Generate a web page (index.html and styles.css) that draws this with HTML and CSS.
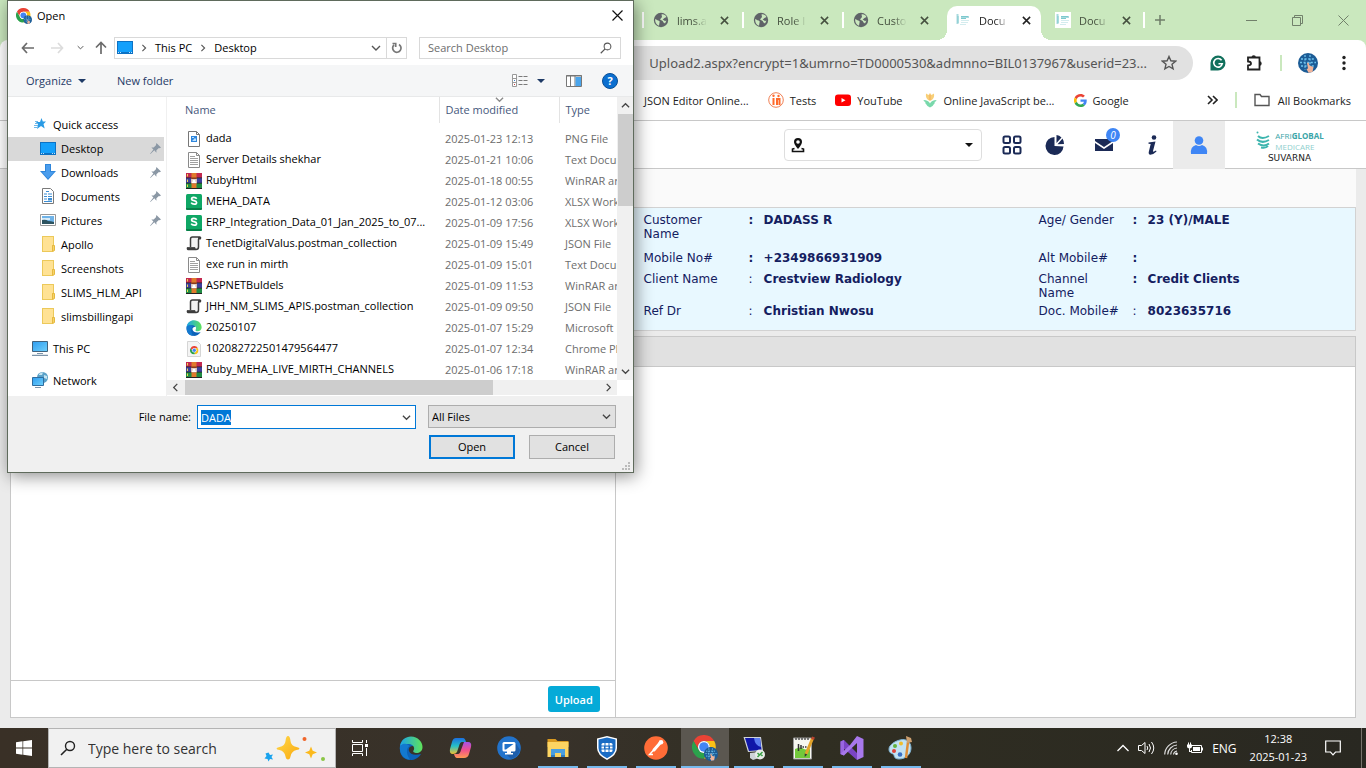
FILE: index.html
```html
<!DOCTYPE html>
<html lang="en">
<head>
  <meta charset="UTF-8">
  <meta name="viewport" content="width=device-width, initial-scale=1">
  <title>Document Upload</title>
  <link rel="stylesheet" href="styles.css">
</head>
<body>
  <!-- shared icons -->
  <svg class="sprite" width="0" height="0" aria-hidden="true">
    <defs>
      <linearGradient id="gEdge" x1="0" y1="0" x2="1" y2="0"><stop offset="0" stop-color="#1ba3e8"/><stop offset="1" stop-color="#5fe35a"/></linearGradient>
      <linearGradient id="gScreen" x1="0" y1="0" x2="1" y2="1"><stop offset="0" stop-color="#2e9df0"/><stop offset="1" stop-color="#6fd0fb"/></linearGradient>
      <linearGradient id="gCopA" x1="0" y1="0" x2="0" y2="1"><stop offset="0" stop-color="#1b6fe0"/><stop offset=".5" stop-color="#25c0c8"/><stop offset="1" stop-color="#f2c230"/></linearGradient>
      <linearGradient id="gCopB" x1="0" y1="0" x2="0" y2="1"><stop offset="0" stop-color="#a552e8"/><stop offset=".5" stop-color="#f0508c"/><stop offset="1" stop-color="#ff9a52"/></linearGradient>
      <linearGradient id="gStar" x1="0" y1="0" x2="1" y2="1"><stop offset="0" stop-color="#ffd84a"/><stop offset="1" stop-color="#f9a90e"/></linearGradient>
    </defs>
    <symbol id="chrome" viewBox="0 0 48 48">
      <path fill="#ea4335" d="M24 12h20.8A24 24 0 0 0 3.2 12l10.4 18A12 12 0 0 1 24 12z"/>
      <path fill="#2ba24c" d="M13.6 30 3.2 12A24 24 0 0 0 24 48l10.4-18a12 12 0 0 1-20.8 0z"/>
      <path fill="#fbc116" d="M34.4 30 24 48a24 24 0 0 0 20.8-36H24a12 12 0 0 1 10.4 18z"/>
      <circle cx="24" cy="24" r="12" fill="#fff"/><circle cx="24" cy="24" r="9.5" fill="#4285f4"/>
    </symbol>
    <symbol id="avatar" viewBox="0 0 20 20">
      <circle cx="10" cy="10" r="10" fill="#1c5c96"/>
      <path fill="none" stroke="#6fc3ee" stroke-width="1.3" stroke-dasharray="2 1.6" d="M3 6h14M2 9.500h16M3 13h14M7 2v15M12 2v15"/>
      <path fill="#f0b49a" d="M9 10l1.500-.5 1 3 4 1.500-1 5-4 .8-2-3.800 1.500-.5z"/>
    </symbol>
    <symbol id="chromeUser" viewBox="0 0 24 24">
      <use href="#chrome" width="22" height="22"/><use href="#avatar" x="11" y="11" width="13" height="13"/>
    </symbol>
    <symbol id="edge" viewBox="0 0 24 24">
      <path fill="#0c62b8" d="M1 10c1-5 5-6 10-5 3 1 4 3 3 5-3 0-5 2-4 5s5 5 12 3c-3 5-8 6.500-12 5.800C4 23 0 18 1 10z"/>
      <path fill="url(#gEdge)" d="M1 10C2 4 6.500.5 12 .5 19 .5 23.500 6 23.500 11c0 4-3 6-6 6-2 0-4-1-3-2.500 1.500-2 .5-6-4.500-6.500C6 7.500 2 9 1 10z"/>
      <path fill="#1379cf" d="M1 10c4-4 8-2 9.500 0C7 12 7 18 11 23.800 4 23 0 17 1 10z"/>
    </symbol>
    <symbol id="globe" viewBox="0 0 16 16">
      <circle cx="8" cy="8" r="7.200" fill="#5f6368"/>
      <path fill="#cae8be" d="M2.200 7 5 8.500c1.500 0 2 1 1.500 2.200l-.5 3C3.500 13 1.800 10 2.200 7zM8.500 2.500c2-.5 4 .5 5 2.500l-2 1-1.800 1.500L12 9l1.500-.5-1.500 3-1.500-1-.8-1.500-2.700-1.500L9 5z"/>
    </symbol>
    <symbol id="cross" viewBox="0 0 10 10"><path fill="none" stroke="currentColor" stroke-width="1.700" d="M1 1l8 8M9 1l-8 8"/></symbol>
    <symbol id="docFav" viewBox="0 0 16 16">
      <path fill="#fff" d="M0 0h16v16H0z"/><path stroke="#a9dade" stroke-width="2" d="M2.500 2v10M6 5h8"/><path stroke="#7cc9ce" d="M3 4v7M6 4.500h7M6 6.500h5"/><path stroke="#d3ecee" d="M6 8.500h8M5 12.500h6M6 10.500h7"/>
    </symbol>
    <symbol id="chev" viewBox="0 0 10 10"><path fill="none" stroke="currentColor" stroke-width="1.400" d="M1 3l4 4 4-4"/></symbol>
    <symbol id="pin" viewBox="0 0 12 12"><path fill="#8b98a5" d="M7 0l5 5-1.500.8-.8-.3L7 8v2.500L4.700 8 .5 12l-.4-.3L3.700 7.200 1.500 5H4l2.500-2.500z"/></symbol>
    <symbol id="desk" viewBox="0 0 16 13"><path fill="#0d72c4" d="M0 0h16v13H0z"/><path fill="#14a0fb" d="M1 1h14v10H1z"/><path stroke="#bfe3fb" stroke-dasharray="1 1" d="M1 11.500h3M12 11.500h3"/></symbol>
    <symbol id="folder" viewBox="0 0 16 16"><path fill="#ecc95a" d="M2 0h12v15l-2 1H2z"/><path fill="#ffe294" d="M3 1h10v8h-1v6H3z"/><path fill="#f5d36c" stroke="#e6b93e" d="M12.500 9.500h2v5l-2 1z"/></symbol>
    <symbol id="txt" viewBox="0 0 16 16"><path fill="#fff" stroke="#8a8a8a" d="M2.500.5h8l3 3v12h-11z"/><path stroke="#a0a0a0" d="M4 4.500h5M4 6.500h8M4 8.500h8M4 10.500h8M4 12.500h8"/><path fill="none" stroke="#8a8a8a" d="M10.500.5v3h3"/></symbol>
    <symbol id="png" viewBox="0 0 16 16"><path fill="#fff" stroke="#777" d="M2.500.5h8l3 3v12h-11z"/><path fill="#2f86dc" d="M5 5h6v6H5z"/><path fill="#bfe3ff" d="M6 6h2v1H6zM6 10l3-3 1 1v2z"/><path fill="none" stroke="#777" d="M10.500.5v3h3"/></symbol>
    <symbol id="rar" viewBox="0 0 16 16">
      <path fill="#c2284f" d="M0 0h16v5H0z"/><path fill="#3d3e9b" d="M0 5h16v5H0z"/><path fill="#1f8b43" d="M0 10h16v5H0z"/><path fill="#222" d="M0 4.500h16v.8H0zM0 9.800h16v.8H0zM0 15h16v1H0z"/>
      <path fill="#e07a2c" d="M5.500 0h5v15h-5z"/><path fill="#8c3b1c" d="M5.500 4.500h5v6h-5z"/><path fill="none" stroke="#fff" stroke-width="1.300" d="M6 6v3.500h1.500V7h1v2.500H10V6"/><path stroke="#ecd94e" d="M1.500 1v2.500M1.500 6.500V9M1.500 11.500V14"/>
    </symbol>
    <symbol id="xlsx" viewBox="0 0 16 16"><rect width="16" height="16" rx="1.500" fill="#0fa765"/><path fill="#087f48" d="M0 14h16v.5q0 1.500-1.500 1.500h-13Q0 16 0 14.500z"/><path fill="none" stroke="#fff" stroke-width="1.700" d="M10.700 4.800C9.500 2.800 5.500 3 5.600 5.100c.1 2 5 1.200 5 3.300 0 2.300-4.300 2.200-5.400.2"/></symbol>
    <symbol id="json" viewBox="0 0 16 16"><path fill="#f2f2f2" stroke="#3c3c3c" stroke-width="1.500" d="M4.500 11V3q0-2 2-2h8q-2 .5-2 2.500V11q0 2.500-2.500 2.500H3Q1 13.500 1.500 12h7q.3 1.500 1.500 1.500"/><path fill="#3c3c3c" d="M12 1h3.200q.3 2-.7 2.500h-2zM1 11.500h8l.5 2.500H3q-2-.3-2-2.500z"/></symbol>
    <symbol id="chromeDoc" viewBox="0 0 16 16"><path fill="#f4f4f4" stroke="#d5d5d5" d="M1.500.5h10l3 3v12h-13z"/><use href="#chrome" x="4" y="5" width="8.500" height="8.500"/></symbol>
    <symbol id="mag" viewBox="0 0 16 16"><circle cx="10" cy="6" r="4.500" fill="none" stroke="currentColor" stroke-width="1.400"/><path stroke="currentColor" stroke-width="1.600" d="M6.800 9.200 1 15"/></symbol>
  </svg>

  <div class="tabstrip">
    <div class="tab"><svg class="i16"><use href="#globe"/></svg><span class="tab-title">lims.a</span><button aria-label="Close tab"><svg class="i9"><use href="#cross"/></svg></button></div>
    <div class="tab"><svg class="i16"><use href="#globe"/></svg><span class="tab-title">Role I</span><button aria-label="Close tab"><svg class="i9"><use href="#cross"/></svg></button></div>
    <div class="tab"><svg class="i16"><use href="#globe"/></svg><span class="tab-title">Custo</span><button aria-label="Close tab"><svg class="i9"><use href="#cross"/></svg></button></div>
    <div class="tab active"><svg class="i16"><use href="#docFav"/></svg><span class="tab-title">Docu</span><button aria-label="Close tab"><svg class="i9"><use href="#cross"/></svg></button></div>
    <div class="tab plain"><svg class="i16"><use href="#docFav"/></svg><span class="tab-title">Docu</span><button aria-label="Close tab"><svg class="i9"><use href="#cross"/></svg></button></div>
    <button class="new-tab" aria-label="New tab"><svg width="12" height="12" viewBox="0 0 12 12"><path stroke="#6f7d69" stroke-width="1.500" d="M6 1v10M1 6h10"/></svg></button>
    <div class="win-controls">
      <button aria-label="Minimize"><svg width="11" height="11" viewBox="0 0 11 11"><path stroke="#71806b" d="M0 5.500h11"/></svg></button>
      <button aria-label="Restore"><svg width="11" height="11" viewBox="0 0 11 11"><path fill="none" stroke="#71806b" d="M.5 2.500h8v8h-8zM2.500 2.500v-2h8v8h-2"/></svg></button>
      <button aria-label="Close"><svg width="11" height="11" viewBox="0 0 11 11"><path stroke="#71806b" d="M.5.5l10 10M10.500.5l-10 10"/></svg></button>
    </div>
  </div>

  <div class="browser-bars">
    <div class="toolbar">
      <div class="omnibox">
        <input type="text" aria-label="Address" value="Upload2.aspx?encrypt=1&amp;umrno=TD0000530&amp;admnno=BIL0137967&amp;userid=23...">
        <button aria-label="Bookmark"><svg width="16" height="16" viewBox="0 0 16 16"><path fill="none" stroke="#555" stroke-width="1.400" d="M8 1.500l1.900 4.300 4.700.4-3.600 3.100 1.100 4.600L8 11.500l-4.100 2.400L5 9.300 1.400 6.200l4.700-.4z"/></svg></button>
      </div>
      <button aria-label="Grammarly"><svg width="16" height="16" viewBox="0 0 16 16"><path fill="#11705c" d="M8 .5A7.500 7.500 0 1 1 8 15.500H.5V8A7.500 7.500 0 0 1 8 .5z"/><path fill="none" stroke="#fff" stroke-width="1.600" d="M11.600 5.300A4.300 4.300 0 1 0 12.300 8.700H8.500"/></svg></button>
      <button aria-label="Extensions"><svg width="18" height="18" viewBox="0 0 18 18"><path fill="none" stroke="#222" stroke-width="1.800" d="M3 3.500h11.500v12H3v-4q3-.2 3-2T3 7.500z"/><path fill="#222" d="M6.500 3.500a2.200 2.200 0 0 1 4.400 0zM14.500 7.300a2.200 2.200 0 0 1 0 4.400z"/></svg></button>
      <span class="bar-sep"></span>
      <button aria-label="Profile"><svg width="20" height="20"><use href="#avatar"/></svg></button>
      <button aria-label="Menu"><svg width="4" height="16" viewBox="0 0 4 16"><g fill="#222"><circle cx="2" cy="2.500" r="1.700"/><circle cx="2" cy="8" r="1.700"/><circle cx="2" cy="13.500" r="1.700"/></g></svg></button>
    </div>
    <div class="bookmarks">
      <a href="#">JSON Editor Online...</a>
      <a href="#"><svg width="16" height="16" viewBox="0 0 16 16"><circle cx="8" cy="8" r="7.300" fill="#fff" stroke="#f08055"/><path fill="none" stroke="#ff6a2b" stroke-width="2" d="M5.500 6v7M9 13V7h2.500v6"/><circle cx="5.500" cy="3.800" r="1.200" fill="#ff6a2b"/><circle cx="10.500" cy="4" r="1.200" fill="#ff6a2b"/></svg>Tests</a>
      <a href="#"><svg width="16" height="16" viewBox="0 0 16 16"><rect y="2.500" width="16" height="11.500" rx="3" fill="#f00"/><path fill="#fff" d="M6.500 6v4.500l4-2.200z"/></svg>YouTube</a>
      <a href="#"><svg width="16" height="16" viewBox="0 0 16 16"><path fill="#f8cf77" d="M8 1l1.500 2L12 1.500Q13 7 8 9 3 7 4 1.500L6.500 3z"/><path fill="none" stroke="#f3a95e" d="M8 3v5"/><path fill="#79d8ab" d="M1.500 8q5 0 6.500 3.500Q9.500 8 14.500 8q0 1.500-2 2 1 1-.5 2-1 2.500-4 3.500-3-1-4-3.500-1.500-1-.5-2-2-.5-2-2z"/></svg>Online JavaScript be...</a>
      <a href="#"><svg width="13" height="13" viewBox="0 0 48 48"><path fill="#ea4335" d="M24 9.500c3.500 0 6.700 1.200 9.200 3.600l6.900-6.900C35.900 2.400 30.500 0 24 0 14.600 0 6.500 5.400 2.600 13.200l8 6.200C12.400 13.700 17.700 9.500 24 9.500z"/><path fill="#4285f4" d="M47 24.500c0-1.600-.2-3.100-.4-4.500H24v9h12.900c-.6 3-2.300 5.500-4.800 7.200l7.700 6C44.400 38 47 32 47 24.500z"/><path fill="#fbbc05" d="M10.500 28.600a14 14 0 0 1 0-9.200l-8-6.200a24 24 0 0 0 0 21.600z"/><path fill="#34a853" d="M24 48c6.500 0 11.900-2.100 15.900-5.800l-7.700-6c-2.200 1.500-5 2.300-8.200 2.300-6.300 0-11.600-4.200-13.500-9.900l-8 6.200C6.500 42.600 14.600 48 24 48z"/></svg>Google</a>
      <button class="more" aria-label="More bookmarks"><svg width="11" height="10" viewBox="0 0 11 10"><path fill="none" stroke="#222" stroke-width="1.600" d="M1 1l4 4-4 4M6 1l4 4-4 4"/></svg></button>
      <span class="bar-sep"></span>
      <a class="all" href="#"><svg width="16" height="14" viewBox="0 0 16 14"><path fill="none" stroke="#555" stroke-width="1.400" d="M1 1.500h5l1.500 2H15v9H1z"/></svg>All Bookmarks</a>
    </div>
  </div>

  <header class="app-header">
    <div class="branch">
      <svg width="14" height="16" viewBox="0 0 14 16"><path fill="#111" d="M7 1a4 4 0 0 1 4 4c0 2.500-4 7-4 7S3 7.500 3 5a4 4 0 0 1 4-4z"/><circle cx="7" cy="5" r="1.800" fill="#fff"/><path fill="none" stroke="#111" stroke-width="1.600" d="M3.500 11.500 1.500 12v2.500h11V12l-2-.5"/></svg>
      <select aria-label="Branch"><option></option></select>
      <i class="caret"></i>
    </div>
    <button class="modules" aria-label="Modules"><svg width="20" height="20" viewBox="0 0 20 20"><g fill="none" stroke="#1b2a56" stroke-width="2"><rect x="1.500" y="1.500" width="6.500" height="6.500" rx="1.500"/><rect x="12" y="1.500" width="6.500" height="6.500" rx="1.500"/><rect x="1.500" y="12" width="6.500" height="6.500" rx="1.500"/><rect x="12" y="12" width="6.500" height="6.500" rx="1.500"/></g></svg></button>
    <button class="reports" aria-label="Reports"><svg width="20" height="20" viewBox="0 0 20 20"><path fill="#1b2a56" d="M9.500 2v9l9 .5A9 9 0 1 1 9.500 2z"/><path fill="#1b2a56" d="M11.500 0a8 8 0 0 1 5 2.500l-5 5.500zM17.500 3.500q1.500 2.500 1.500 5.500l-6.500.3z"/></svg></button>
    <button class="mail" aria-label="Messages"><svg width="18" height="12" viewBox="0 0 18 12"><path fill="#1b2a56" d="M0 0h18v2L9 8 0 2zM0 4l9 6 9-6v8H0z"/></svg><span class="badge">0</span></button>
    <button class="info" aria-label="Information"><svg width="11" height="20" viewBox="0 0 11 20"><circle cx="7" cy="2.500" r="2.300" fill="#1b2a56"/><path fill="#1b2a56" d="M1.500 7.500 8.500 6.500 6 16q0 1.500 3-.5l.5 1Q6 20 3 19.800 1 19 2 16l1.700-7-2.200-.3z"/></svg></button>
    <button class="user" aria-label="User"><svg width="18" height="18" viewBox="0 0 18 18"><circle cx="9" cy="4.500" r="4.300" fill="#3f86f5"/><path fill="#3f86f5" d="M1 18q-1-7.500 5-9 3 2 6 0 6 1.500 5 9z"/></svg></button>
    <div class="brand">
      <div class="brand-logo">
        <svg width="16" height="20" viewBox="0 0 16 20"><g fill="none" stroke="#3db5ae" stroke-width="2"><path d="M3 6q4 4 11 0"/><path d="M2 9.500q5 4.500 12 .5"/><path d="M3 13.500q6 4 11 0"/><path d="M6 17.500q5 1 7-1.500"/></g><circle cx="2.500" cy="2.500" r="1" fill="#3db5ae"/></svg>
        <div class="brand-name"><span>AFRI<b>GLOBAL</b></span><span class="light">MEDICARE</span></div>
      </div>
      <div class="brand-sub">SUVARNA</div>
    </div>
  </header>

  <main>
    <div class="filter-band"></div>

    <section class="patient">
      <span class="lbl">Customer Name</span><b>:</b><b>DADASS R</b>
      <span class="lbl">Age/ Gender</span><b>:</b><b>23 (Y)/MALE</b>
      <span class="lbl">Mobile No#</span><b>:</b><b>+2349866931909</b>
      <span class="lbl">Alt Mobile#</span><b>:</b><b></b>
      <span class="lbl">Client Name</span><span>:</span><b>Crestview Radiology</b>
      <span class="lbl">Channel Name</span><b>:</b><b>Credit Clients</b>
      <span class="lbl">Ref Dr</span><span>:</span><b>Christian Nwosu</b>
      <span class="lbl">Doc. Mobile#</span><span>:</span><b>8023635716</b>
    </section>

    <section class="docs">
      <div class="docs-head"></div>
      <div class="docs-body">
        <div class="docs-list">
          <div class="docs-actions"><button class="upload">Upload</button></div>
        </div>
        <div class="docs-view"></div>
      </div>
    </section>
  </main>

  <footer class="taskbar">
    <button class="start" aria-label="Start"><svg width="16" height="16" viewBox="0 0 16 16"><path fill="#fff" d="M0 2.200l6.500-.9v6.300H0zM7.200 1.200 16 0v7.600H7.200zM0 8.400h6.500v6.300L0 13.800zM7.200 8.400H16V16l-8.800-1.200z"/></svg></button>
    <label class="task-search">
      <svg class="i16"><use href="#mag"/></svg>
      <input type="text" placeholder="Type here to search">
      <svg width="62" height="28" viewBox="0 0 62 28"><path fill="url(#gStar)" d="M24 2q2 0 2.500 5t6 6q3 .5 3 1.500t-3 1.500q-5 1-6 6.500-.5 3-2.500 3t-2.500-3q-1-5.500-6-6.500-3-.5-3-1.500t3-1.500q5.500-1 6-6T24 2z"/><path fill="#fbb91c" d="M47 12.500l1.700 4.300 4.300 1.700-4.300 1.700L47 24.500l-1.700-4.300-4.300-1.700 4.300-1.700z"/><path fill="#1aa3ee" d="M4.500 18.500 6 21l3-.5-1.500 2.500L9 25.500l-3-.5-1.500 2.500L3.500 25l-3-.5L2.500 22l-1-2.500z"/><circle cx="40.500" cy="5" r="2" fill="#f0652a"/><circle cx="59" cy="25" r="2" fill="#8bc646"/></svg>
    </label>
    <button class="view" aria-label="Task view"><svg width="16" height="16" viewBox="0 0 16 16"><path fill="none" stroke="#fff" d="M.5 0v2.500h10V0M.5 4.500h10v7H.5zM.5 16v-2.500h10V16M14.500 0v3M14.500 8v8"/><path fill="#fff" d="M13 4h3v3h-3z"/></svg></button>
    <div class="apps">
      <button aria-label="Edge"><svg width="24" height="24"><use href="#edge"/></svg></button>
      <button aria-label="Copilot"><svg width="24" height="24" viewBox="0 0 24 24"><path fill="url(#gCopA)" d="M8 2h7q2 0 3 4h-4q-2 0-3 4l-2 6q-1 2-4 2-4 0-3-5l2-7q1-4 4-4z"/><path fill="url(#gCopB)" d="M16 6h4q4 0 3 5l-2 7q-1 4-5 4H9q-2 0-3-4h4q2 0 3-4z"/></svg></button>
      <button aria-label="Remote access"><svg width="24" height="24" viewBox="0 0 24 24"><circle cx="12" cy="12" r="11.800" fill="#2273cb"/><path fill="#1d5eab" d="M18 6l5 8q-2 7-9 9l-5-5z"/><rect x="5.500" y="6" width="13" height="9.500" rx="1.500" fill="#fff"/><path fill="#2273cb" d="M7.500 8h9L9 13.500H7.500z"/><path fill="#fff" d="M10 15h4v2h2v1.500H8V17h2z"/></svg></button>
      <button class="open" aria-label="File Explorer"><svg width="24" height="24" viewBox="0 0 24 24"><path fill="#d99a20" d="M1.500 3h8l2 2h11v6h-21z"/><path fill="#fcd462" d="M1.500 6h21v15h-21z"/><path fill="#4a9fe0" d="M5 13h14v8h-4v-4H9v4H5z"/><path fill="#2d7cc4" d="M5 19h4v2H5zM15 19h4v2h-4z"/></svg></button>
      <button class="open" aria-label="Security"><svg width="24" height="24" viewBox="0 0 24 24"><path fill="#fff" d="M12 0l10 2.500V12q0 7-10 12Q2 19 2 12V2.500z"/><path fill="#1a6cc4" d="M12 1.500l8.500 2V12q0 6-8.500 10.300Q3.500 18 3.500 12V3.500z"/><rect x="6.500" y="7" width="11" height="9" rx="1.500" fill="#fff"/><path stroke="#1a6cc4" d="M6 10h12M6 13h12M10 6.500V10M14 6.500V10M10 13v3.500M14 13v3.500M9.500 10v3M14.500 10v3"/><path fill="#1a6cc4" d="M10 10h4v3h-4z"/><path fill="#fff" d="M10.500 10.700h3v1.600h-3z"/></svg></button>
      <button class="open" aria-label="Postman"><svg width="24" height="24" viewBox="0 0 24 24"><circle cx="12" cy="12" r="11.800" fill="#ff6c37"/><path fill="none" stroke="#fff" stroke-linecap="round" stroke-width="3" d="M16 7l-6 7"/><path fill="none" stroke="#fff" stroke-width="1.400" d="M11 12.500 5.500 18.500H9"/><circle cx="17" cy="6.300" r="2.300" fill="#fff"/></svg></button>
      <button class="open current" aria-label="Chrome"><svg width="26" height="26"><use href="#chromeUser"/></svg></button>
      <button class="open" aria-label="Remote desktop"><svg width="24" height="24" viewBox="0 0 24 24"><path fill="#cfd3d8" d="M1.500 1h17.500l2 14-15 1zM8 17l9-1 3 5-9 3-3-2z"/><path fill="#1017a8" d="M3 2h15l1.600 12L7 15z"/><path fill="#5b7df0" d="M12 2h6l1 9q-6-1-7-9z"/><circle cx="18" cy="18.500" r="5" fill="#e9ece9"/><path fill="none" stroke="#3aa045" stroke-width="1.500" d="M15.500 17l2 2-2 2M20.500 16l-2 2 2 2"/></svg></button>
      <button class="open" aria-label="Notepad++"><svg width="24" height="24" viewBox="0 0 24 24"><path fill="#f7f7f0" stroke="#999" d="M2.500 2h18v21h-18z"/><path fill="#72c83b" d="M4 13q6-3 9 0 3 1 6 0v9H4z"/><path fill="none" stroke="#555" stroke-width="1.600" stroke-dasharray="2 1" d="M4 3h15"/><path stroke="#333" stroke-width="1.500" d="M7.500 8v7M10 9v4M11.500 11h1.500M14 11h1.500"/><path stroke="#e2a32a" stroke-width="3" d="M21.500 2.500 15 18"/><path stroke="#b8442e" stroke-width="3" d="M22.500 1l-1 2.500"/><path fill="#333" d="M13.700 17.500l2.600 1-2.600 2.500z"/></svg></button>
      <button class="open" aria-label="Visual Studio"><svg width="24" height="24" viewBox="0 0 24 24"><path fill="#7b45c4" d="M.5 5.500 4 4l13 13V24L4.500 13 .5 18.500z"/><path fill="#9a66e0" d="M.5 5.500 4 4v15.500L.5 18z"/><path fill="#a878ec" d="M17 0l6.500 3v18L17 24V7L4 19.500.5 18 10 9z"/></svg></button>
      <button class="open" aria-label="Paint"><svg width="26" height="24" viewBox="0 0 26 24"><path fill="#c2e2f3" stroke="#7fb3d3" d="M12 4c6-2 11 2 11 8s-5 11-12 11c-6 0-4-4-6-5s-4-1-4-5 6-8 11-9z"/><circle cx="7" cy="10" r="2" fill="#62b340"/><circle cx="13" cy="7.500" r="2" fill="#f0bd2c"/><circle cx="6" cy="15" r="2" fill="#df4338"/><circle cx="12" cy="18.500" r="2.300" fill="#3a6fc4"/><path stroke="#df8d36" stroke-width="2.500" d="M20 6l-2 16"/><path fill="#cda070" d="M18 0l5 2 1 4-5 1z"/></svg></button>
    </div>
    <div class="tray">
      <svg width="12" height="8" viewBox="0 0 12 8"><path fill="none" stroke="#fff" stroke-width="1.300" d="M.5 7 6 1.500 11.500 7"/></svg>
      <svg width="17" height="14" viewBox="0 0 17 14"><path fill="none" stroke="#fff" d="M.5 4.500h3L7 1.500v11l-3.500-3h-3zM9 5q1.500 2 0 4M11 3q3 4 0 8M13.500 1q4.500 6 0 12"/></svg>
      <svg width="14" height="14" viewBox="0 0 14 14"><path fill="none" stroke="#ddd" stroke-width="1.200" d="M.7 13.500A13 13 0 0 1 13 1M3.700 13.500A10 10 0 0 1 13 4M6.700 13.500A7 7 0 0 1 13 7M9.500 13.500A4 4 0 0 1 13 10"/><circle cx="12.500" cy="12.700" r="1.300" fill="#fff"/></svg>
      <svg width="16" height="12" viewBox="0 0 16 12"><path fill="none" stroke="#fff" d="M4.500 3.500h10v7h-10V8"/><path fill="#fff" d="M6 5h7v4H6zM15 5.500h1v3h-1zM0 2.500h5v2q0 2-2.500 2T0 4.500zM1 .5h1v2H1zM3 .5h1v2H3zM2 6h1v3h2v1H2z"/></svg>
      <span class="lang">ENG</span>
      <div class="clock"><span>12:38</span><span>2025-01-23</span></div>
      <svg class="note" width="16" height="16" viewBox="0 0 16 16"><path fill="none" stroke="#fff" stroke-width="1.200" d="M.7 1h14.600v11h-4.800L8 14.800 5.500 12H.7z"/></svg>
    </div>
  </footer>

  <div class="dialog" role="dialog" aria-label="Open">
    <div class="dlg-title">
      <svg class="i16"><use href="#chromeUser"/></svg>
      <span>Open</span>
      <button aria-label="Close"><svg width="11" height="11" viewBox="0 0 11 11"><path stroke="#111" stroke-width="1.200" d="M.5.5l10 10M10.500.5l-10 10"/></svg></button>
    </div>

    <div class="dlg-nav">
      <button class="back" aria-label="Back"><svg width="13" height="12" viewBox="0 0 13 12"><path fill="none" stroke="#6b6b6b" stroke-width="1.700" d="M6 1 1.500 6 6 11M1.500 6H13"/></svg></button>
      <button class="fwd" aria-label="Forward"><svg width="13" height="12" viewBox="0 0 13 12"><path fill="none" stroke="#dcdcdc" stroke-width="1.700" d="M7 1l4.500 5L7 11M11.500 6H0"/></svg></button>
      <button class="recent" aria-label="Recent"><svg width="7" height="7"><use href="#chev"/></svg></button>
      <button class="up" aria-label="Up"><svg width="12" height="13" viewBox="0 0 12 13"><path fill="none" stroke="#6b6b6b" stroke-width="1.700" d="M1 6.500l5-5 5 5M6 1.500V13"/></svg></button>
      <div class="path">
        <svg width="16" height="13"><use href="#desk"/></svg>
        <svg class="right" width="8" height="8"><use href="#chev"/></svg>
        <a href="#">This PC</a>
        <svg class="right" width="8" height="8"><use href="#chev"/></svg>
        <a href="#">Desktop</a>
        <button class="drop" aria-label="Previous locations"><svg class="i10"><use href="#chev"/></svg></button>
        <button class="reload" aria-label="Refresh"><svg width="12" height="12" viewBox="0 0 12 12"><path fill="none" stroke="#777" stroke-width="1.700" d="M3 3A4.200 4.200 0 1 0 8 2.500M1.500 1.500h3.200V5"/></svg></button>
      </div>
      <div class="find">
        <input type="text" placeholder="Search Desktop" aria-label="Search Desktop">
        <svg width="12" height="12"><use href="#mag"/></svg>
      </div>
    </div>

    <div class="dlg-tools">
      <button class="organize">Organize <i class="caret"></i></button>
      <button>New folder</button>
      <button class="views" aria-label="Change view"><svg width="17" height="14" viewBox="0 0 17 14"><path fill="#fff" stroke="#999" d="M.5.5h4v12h-4zM.5 4.500h4M.5 8.500h4"/><path stroke="#7a7a7a" stroke-width="1.200" stroke-dasharray="4 1" d="M6.500 2.500h10M6.500 6.500h10M6.500 10.500h10"/><path fill="#3b82d0" d="M2 6h1v1H2z"/><path fill="#c44" d="M2 10h1v1H2z"/></svg><i class="caret"></i></button>
      <button class="pane" aria-label="Preview pane"><svg width="16" height="12" viewBox="0 0 16 12"><path fill="#fff" stroke="#777" d="M.5.5h15v11H.5z"/><path stroke="#777" d="M0 1h16M4.500 1v10M9 1v10"/><path fill="#4aa5ec" d="M9.500 2H15v9H9.500z"/></svg></button>
      <button class="help" aria-label="Help">?</button>
    </div>

    <div class="dlg-body">
      <nav class="places">
        <a class="top" href="#"><svg width="16" height="14" viewBox="0 0 16 14"><path fill="#2a9be5" d="M9.500 1l1.300 3.500H14L11.500 7l1.200 4.500L9 9l-4 3 1-4.500L4 5h4z"/><path stroke="#6fb8e8" d="M3 4.500h3M3 6.500h3M2 8.500h4M2 10.500h3"/></svg>Quick access</a>
        <a class="selected" href="#"><svg width="16" height="13"><use href="#desk"/></svg>Desktop<svg class="pin"><use href="#pin"/></svg></a>
        <a href="#"><svg class="i16" viewBox="0 0 16 16"><path fill="#2f86db" d="M5 0h6v7h5l-8 9-8-9h5z"/><path fill="#4a9ded" d="M6 1h4v7h4l-6 6.500L2 8h4z"/></svg>Downloads<svg class="pin"><use href="#pin"/></svg></a>
        <a href="#"><svg class="i16" viewBox="0 0 16 16"><path fill="#fff" stroke="#7a7a7a" d="M2.500.5h8l3 3v12h-11z"/><path stroke="#3c8ed5" stroke-width="1.200" d="M6 3.500h3M4 6h3M8 6h4M4 8.500h3M8 8.500h4M4 11h3M4 13.500h8"/><path fill="#3c8ed5" d="M8 10h4v2.500H8z"/></svg>Documents<svg class="pin"><use href="#pin"/></svg></a>
        <a href="#"><svg width="16" height="12" viewBox="0 0 16 12"><path fill="#fff" stroke="#999" d="M.5.5h15v11H.5z"/><path fill="#6fb3e8" d="M2 2h12v8H2z"/><path fill="#d7ebf8" d="M2 4h8v2H2z"/><path fill="#2c5360" d="M2 6q4-1 6 1 3 0 6 1v2H2z"/></svg>Pictures<svg class="pin"><use href="#pin"/></svg></a>
        <a href="#"><svg class="i16"><use href="#folder"/></svg>Apollo</a>
        <a href="#"><svg class="i16"><use href="#folder"/></svg>Screenshots</a>
        <a href="#"><svg class="i16"><use href="#folder"/></svg>SLIMS_HLM_API</a>
        <a href="#"><svg class="i16"><use href="#folder"/></svg>slimsbillingapi</a>
        <a class="top gap" href="#"><svg width="16" height="15" viewBox="0 0 16 15"><path fill="url(#gScreen)" stroke="#41627c" d="M.5.500h15v10H.5z"/><path stroke="#7c95aa" stroke-width="1.200" d="M5 12.500h6M0 14.400h16"/></svg>This PC</a>
        <a class="top gap" href="#"><svg class="i16" viewBox="0 0 16 16"><circle cx="10.500" cy="5.500" r="5.500" fill="#5aa1c8"/><path fill="#c5e5f2" d="M7 2q2-2 4-1.500L10 3H7zM12 3l3 1v3l-3-1z"/><path fill="url(#gScreen)" stroke="#2f6d9f" d="M.5 5.500h11v8H.5z"/><path stroke="#7c95aa" d="M3 15.500h6"/></svg>Network</a>
      </nav>
      <div class="files">
        <div class="files-list">
          <table>
            <thead>
              <tr><th class="c-name">Name</th><th class="c-date">Date modified<svg class="sort"><use href="#chev"/></svg></th><th class="c-type">Type</th></tr>
            </thead>
            <tbody>
              <tr><td><svg class="i16"><use href="#png"/></svg>dada</td><td>2025-01-23 12:13</td><td>PNG File</td></tr>
              <tr><td><svg class="i16"><use href="#txt"/></svg>Server Details shekhar</td><td>2025-01-21 10:06</td><td>Text Document</td></tr>
              <tr><td><svg class="i16"><use href="#rar"/></svg>RubyHtml</td><td>2025-01-18 00:55</td><td>WinRAR archive</td></tr>
              <tr><td><svg class="i16"><use href="#xlsx"/></svg>MEHA_DATA</td><td>2025-01-12 03:06</td><td>XLSX Worksheet</td></tr>
              <tr><td><svg class="i16"><use href="#xlsx"/></svg>ERP_Integration_Data_01_Jan_2025_to_07...</td><td>2025-01-09 17:56</td><td>XLSX Worksheet</td></tr>
              <tr><td><svg class="i16"><use href="#json"/></svg>TenetDigitalValus.postman_collection</td><td>2025-01-09 15:49</td><td>JSON File</td></tr>
              <tr><td><svg class="i16"><use href="#txt"/></svg>exe run in mirth</td><td>2025-01-09 15:01</td><td>Text Document</td></tr>
              <tr><td><svg class="i16"><use href="#rar"/></svg>ASPNETBuldels</td><td>2025-01-09 11:53</td><td>WinRAR archive</td></tr>
              <tr><td><svg class="i16"><use href="#json"/></svg>JHH_NM_SLIMS_APIS.postman_collection</td><td>2025-01-09 09:50</td><td>JSON File</td></tr>
              <tr><td><svg class="i16"><use href="#edge"/></svg>20250107</td><td>2025-01-07 15:29</td><td>Microsoft Edge</td></tr>
              <tr><td><svg class="i16"><use href="#chromeDoc"/></svg>102082722501479564477</td><td>2025-01-07 12:34</td><td>Chrome PDF</td></tr>
              <tr><td><svg class="i16"><use href="#rar"/></svg>Ruby_MEHA_LIVE_MIRTH_CHANNELS</td><td>2025-01-06 17:18</td><td>WinRAR archive</td></tr>
            </tbody>
          </table>
        </div>
        <div class="vscroll">
          <svg class="i9 flip"><use href="#chev"/></svg>
          <div class="thumb"></div>
          <svg class="i9"><use href="#chev"/></svg>
        </div>
        <div class="hscroll">
          <svg class="i9 left"><use href="#chev"/></svg>
          <div class="thumb"></div>
          <svg class="i9 right"><use href="#chev"/></svg>
        </div>
      </div>
    </div>

    <form class="dlg-foot">
      <label for="fname">File name:</label>
      <div class="field">
        <input id="fname" type="text" value="DADA" autofocus>
        <svg class="i9"><use href="#chev"/></svg>
      </div>
      <div class="field type">
        <select aria-label="File type"><option>All Files</option></select>
        <svg class="i9"><use href="#chev"/></svg>
      </div>
      <div class="dlg-buttons">
        <button type="button" class="primary">Open</button>
        <button type="button">Cancel</button>
      </div>
      <svg class="grip" width="9" height="9" viewBox="0 0 9 9"><path fill="#bbb" d="M6 0h2v2H6zM3 3h2v2H3zM6 3h2v2H6zM0 6h2v2H0zM3 6h2v2H3zM6 6h2v2H6z"/></svg>
    </form>
  </div>

  <script>
    const fname = document.getElementById("fname");
    fname.focus();
    fname.select();
  </script>
</body>
</html>
```
FILE: styles.css
```css
* {
  box-sizing: border-box;
}

body {
  margin: 0;
  height: 100vh;
  display: flex;
  flex-direction: column;
  overflow: hidden;
  font-family: "Open Sans", "Noto Sans", sans-serif;
  font-size: 11px;
  color: #222;
  background: #ebebeb;
}

button, input, select {
  font: inherit;
  color: inherit;
  border: none;
  background: none;
  padding: 0;
  margin: 0;
  outline: none;
}

button {
  display: flex;
  align-items: center;
  justify-content: center;
}

input, select {
  min-width: 0;
  flex: 1;
}

a {
  color: inherit;
  text-decoration: none;
}

svg {
  flex: none;
  display: block;
}

.sprite { position: absolute; }
.i16 { width: 16px; height: 16px; }
.i10 { width: 10px; height: 10px; }
.i9 { width: 9px; height: 9px; }
.flip { transform: rotate(180deg); }
.left { transform: rotate(90deg); }
.right { transform: rotate(-90deg); }

.caret {
  border: 4px solid transparent;
  border-top-color: currentColor;
  border-bottom: none;
}

/* browser */
.tabstrip {
  height: 40px;
  display: flex;
  justify-content: flex-end;
  background: #cae8be;
  color: #45503f;
}

.tab {
  width: 100px;
  display: flex;
  align-items: center;
  padding: 0 0 0 10px;
  position: relative;
}

.tab::before {
  content: "";
  position: absolute;
  left: -1px;
  top: 12px;
  width: 2px;
  height: 16px;
  background: #fff;
}

.tab-title {
  width: 30px;
  margin: 0 13px 0 8px;
  overflow: hidden;
  white-space: nowrap;
  -webkit-mask-image: linear-gradient(90deg, #000 55%, transparent);
  mask-image: linear-gradient(90deg, #000 55%, transparent);
}

.tab.active {
  width: 94px;
  margin: 6px 2px 0 4px;
  padding: 0 0 6px 8px;
  background: #fff;
  border-radius: 10px 10px 0 0;
  color: #222;
}

.tab.active::before, .tab.active::after {
  content: "";
  position: absolute;
  left: -10px;
  top: auto;
  bottom: 0;
  width: 10px;
  height: 10px;
  background: radial-gradient(circle at 0 0, transparent 10px, #fff 10px);
}

.tab.active::after {
  left: auto;
  right: -10px;
  background: radial-gradient(circle at 100% 0, transparent 10px, #fff 10px);
}

.tab.plain { padding-left: 12px; }
.tab.plain::before { display: none; }

.new-tab {
  width: 34px;
  margin-right: 51px;
  position: relative;
}

.new-tab::before {
  content: "";
  position: absolute;
  left: 0;
  top: 12px;
  width: 2px;
  height: 16px;
  background: #fff;
}

.win-controls { display: flex; }
.win-controls button { width: 46px; }

.browser-bars {
  background: linear-gradient(#cae8be 8px, #fff 8px);
  border-bottom: 1px solid #c8c8c8;
}

.toolbar {
  height: 40px;
  display: flex;
  align-items: center;
  padding: 6px 4px 0 100px;
  background: #fff;
  border-radius: 8px 8px 0 0;
}

.toolbar button { width: 36px; height: 34px; }

.omnibox {
  flex: 1;
  display: flex;
  height: 34px;
  margin-right: 7px;
  padding-right: 6px;
  border-radius: 17px;
  background: #e1e1e1;
  color: #555;
  font-family: "Noto Sans", sans-serif;
  font-size: 13px;
}

.omnibox input { text-align: right; }
.omnibox button { margin-left: 4px; }

.bar-sep {
  width: 2px;
  height: 16px;
  margin: 0 8px;
  background: #cae8be;
}

.bookmarks {
  height: 40px;
  display: flex;
  align-items: center;
  justify-content: flex-end;
  gap: 19px;
  padding-right: 15px;
  background: #fff;
  white-space: nowrap;
}

.bookmarks a {
  display: flex;
  align-items: center;
  gap: 6px;
}

.bookmarks .more { margin-left: 59px; }
.bookmarks .bar-sep { margin: 0 -2px; }
.bookmarks .all { gap: 8px; }

/* application */
.app-header {
  height: 48px;
  flex: none;
  display: flex;
  justify-content: flex-end;
  align-items: center;
  background: #fff;
  border-bottom: 1px solid #c8c8c8;
}

.app-header > button { height: 48px; }

.branch {
  width: 198px;
  height: 32px;
  margin-right: 9px;
  display: flex;
  align-items: center;
  padding: 0 8px 0 6px;
  border: 1px solid #dedede;
  border-radius: 4px;
  color: #111;
}

.branch select { appearance: none; height: 30px; }
.app-header .modules { width: 42px; }
.app-header .reports { width: 44px; }
.app-header .mail { position: relative; width: 54px; }
.app-header .info { width: 42px; }

.badge {
  position: absolute;
  left: 29px;
  top: 7px;
  width: 14px;
  height: 14px;
  border-radius: 50%;
  background: #3f86f5;
  color: #fff;
  font-size: 10px;
  font-style: italic;
  line-height: 14px;
}

.app-header .user {
  width: 52px;
  background: #ebebeb;
}

.brand {
  width: 141px;
  padding: 4px 12px 0 0;
  text-align: center;
}

.brand-logo {
  display: flex;
  justify-content: center;
  gap: 4px;
}

.brand-name {
  display: flex;
  flex-direction: column;
  font-size: 8px;
  line-height: 11px;
  color: #3aa5a8;
  text-align: left;
}

.brand-name .light { color: #8fcfce; }

.brand-sub {
  font-family: "DejaVu Sans", sans-serif;
  font-size: 9px;
  line-height: 12px;
}

main {
  flex: 1;
  min-height: 0;
  display: flex;
  flex-direction: column;
  padding: 0 10px 10px;
}

.filter-band {
  height: 38px;
  background: #fafafa;
}

.patient {
  display: grid;
  grid-template-columns: 105px 15px 275px 94px 15px 1fr;
  grid-template-rows: 38px 21px 32px 26px;
  padding: 5px 0 0 47%;
  margin-bottom: 5px;
  border: 1px solid #d2d2d2;
  background: #e8f8ff;
  color: #14205f;
  font-family: "DejaVu Sans", sans-serif;
  font-size: 12px;
  line-height: 14px;
}

.lbl { padding-right: 11px; }

.docs {
  flex: 1;
  display: flex;
  flex-direction: column;
  background: #fff;
  border: 1px solid #c8c8c8;
}

.docs-head {
  height: 30px;
  background: #e1e1e1;
  border-bottom: 1px solid #c8c8c8;
}

.docs-body {
  flex: 1;
  display: flex;
}

.docs-list {
  width: 45%;
  display: flex;
  flex-direction: column;
  justify-content: flex-end;
  border-right: 1px solid #c8c8c8;
}

.docs-actions {
  display: flex;
  justify-content: flex-end;
  padding: 5px 15px;
  border-top: 1px solid #c8c8c8;
}

.upload {
  width: 52px;
  height: 26px;
  border-radius: 3px;
  background: #05aad8;
  color: #fff;
  font-weight: 600;
}

/* taskbar */
.taskbar {
  height: 40px;
  flex: none;
  display: flex;
  align-items: stretch;
  background: linear-gradient(90deg, #393026, #38322a 40%, #302e22 60%, #292821);
  color: #fff;
}

.start, .view { width: 48px; }

.task-search {
  width: 288px;
  display: flex;
  align-items: center;
  padding: 0 9px 0 11px;
  gap: 12px;
  background: #f1f1f1;
  border: 1px solid #b4b4b4;
  color: #222;
  font-size: 14px;
}

.task-search input::placeholder { color: #333; opacity: 1; }

.apps {
  display: flex;
  gap: 1px;
  margin-left: 3px;
}

.apps button {
  width: 48px;
  position: relative;
}

.apps .open::after {
  content: "";
  position: absolute;
  left: 4px;
  right: 4px;
  bottom: 0;
  height: 2px;
  background: #76b9ed;
}

.apps .current { background: #5b5750; }
.apps .current::after { left: 0; right: 0; }

.tray {
  flex: 1;
  display: flex;
  align-items: center;
  justify-content: flex-end;
  gap: 9px;
  margin-right: 4px;
  padding-right: 20px;
  border-right: 1px solid #77736c;
}

.lang { font-size: 12px; }

.clock {
  display: flex;
  flex-direction: column;
  align-items: center;
  line-height: 18px;
  margin: 0 9px 0 4px;
}

/* open file dialog */
.dialog {
  position: absolute;
  left: 7px;
  top: 0;
  width: 627px;
  height: 473px;
  display: flex;
  flex-direction: column;
  background: #fff;
  border: 1px solid #5f6b5c;
  box-shadow: 2px 3px 16px rgba(0, 0, 0, 0.45);
  color: #000;
}

.dlg-title {
  height: 29px;
  display: flex;
  align-items: center;
  gap: 5px;
  padding-left: 8px;
}

.dlg-title button {
  width: 31px;
  margin-left: auto;
}

.dlg-nav {
  height: 35px;
  display: flex;
  align-items: center;
  padding: 0 12px 0 13px;
  color: #555;
}

.dlg-nav .back, .dlg-nav .fwd { width: 13px; }
.dlg-nav .fwd { margin-left: 17px; }
.dlg-nav .recent { margin-left: 13px; }
.dlg-nav .up { margin: 0 7px 0 11px; }

.path {
  width: 293px;
  height: 22px;
  display: flex;
  align-items: center;
  gap: 7px;
  padding-left: 2px;
  border: 1px solid #d9d9d9;
}

.path a { color: #000; }
.path button { width: 20px; height: 20px; }
.path .drop { margin-left: auto; }

.path .reload {
  margin-left: -7px;
  border-left: 1px solid #d9d9d9;
}

.find {
  flex: 1;
  height: 22px;
  display: flex;
  align-items: center;
  margin-left: 12px;
  padding: 0 8px;
  border: 1px solid #d9d9d9;
}

.find input::placeholder { color: #6d6d6d; opacity: 1; }

.dlg-tools {
  height: 32px;
  display: flex;
  align-items: center;
  padding: 0 15px 0 18px;
  background: #f5f6f7;
  border-bottom: 1px solid #e8e9ea;
  color: #1e3a66;
}

.dlg-tools .organize { gap: 6px; margin-right: 31px; }
.dlg-tools .views { gap: 8px; margin: 0 21px 0 auto; }
.dlg-tools .pane { margin-right: 20px; }

.dlg-tools .help {
  width: 16px;
  height: 16px;
  border: 1px solid #0a4f96;
  border-radius: 50%;
  background: #0b6fd0;
  color: #fff;
  font-weight: bold;
}

.dlg-body {
  height: 299px;
  display: flex;
}

.places {
  width: 159px;
  padding-top: 16px;
  border-right: 1px solid #f0f0f0;
}

.places a {
  height: 24px;
  display: flex;
  align-items: center;
  gap: 5px;
  margin-right: 2px;
  padding: 0 3px 2px 32px;
}

.places .top { padding-left: 24px; }
.places .gap { margin-top: 8px; }
.places .selected { background: #d9d9d9; }

.pin {
  width: 11px;
  height: 11px;
  margin-left: auto;
}

.files {
  flex: 1;
  min-width: 0;
  display: grid;
  grid-template-columns: 1fr 16px;
  grid-template-rows: 283px 15px;
}

.files-list { overflow: hidden; }

.files table {
  width: 500px;
  table-layout: fixed;
  border-collapse: collapse;
}

.files th {
  height: 26px;
  padding: 0 6px 2px;
  text-align: left;
  font-weight: normal;
  color: #46587c;
  border-right: 1px solid #e3e3e3;
}

.files .c-name { width: 272px; padding-left: 18px; }
.files .c-date { width: 120px; position: relative; }

.sort {
  position: absolute;
  left: 55px;
  top: -2px;
  width: 9px;
  height: 9px;
  color: #8a8a8a;
}

.files tbody::before {
  content: "";
  display: block;
  height: 5px;
}

.files td {
  height: 21px;
  padding: 0 6px;
  color: #6d6d6d;
  white-space: nowrap;
}

.files td:first-child {
  padding: 0 0 0 19px;
  color: #000;
}

.files td svg {
  display: inline-block;
  vertical-align: middle;
  margin-right: 4px;
}

.vscroll, .hscroll {
  display: flex;
  align-items: center;
  justify-content: space-between;
  background: #f0f0f0;
  color: #444;
}

.vscroll { flex-direction: column; padding: 4px 0; }
.hscroll { padding: 0 4px; }
.thumb { background: #cdcdcd; }
.vscroll .thumb { width: 15px; height: 92px; margin: 4px 0 auto; }
.hscroll .thumb { width: 308px; height: 15px; margin: 0 auto 0 5px; }

.dlg-foot {
  flex: 1;
  display: grid;
  grid-template-columns: 183px 219px 188px;
  grid-template-rows: 24px 24px;
  column-gap: 6px;
  row-gap: 6px;
  padding-top: 9px;
  background: #f0f0f0;
  position: relative;
}

.dlg-foot label {
  text-align: right;
  line-height: 24px;
}

.field {
  display: flex;
  align-items: center;
  padding: 0 4px 0 3px;
  border: 1px solid #0078d7;
  background: #fff;
  color: #444;
}

.field input { line-height: 15px; }

.field input::selection {
  background: #0078d7;
  color: #fff;
}

.field.type {
  height: 23px;
  margin-left: 6px;
  width: 188px;
  background: #e1e1e1;
  border-color: #adadad;
}

.field select { appearance: none; color: #000; }

.dlg-buttons {
  grid-column: 3;
  display: flex;
  gap: 14px;
  margin-left: 7px;
}

.dlg-buttons button {
  width: 86px;
  height: 24px;
  flex: none;
  padding-bottom: 2px;
  border: 1px solid #adadad;
  background: #e1e1e1;
}

.dlg-buttons .primary { border: 2px solid #0078d7; }

.grip {
  position: absolute;
  right: 2px;
  bottom: 1px;
}
```
